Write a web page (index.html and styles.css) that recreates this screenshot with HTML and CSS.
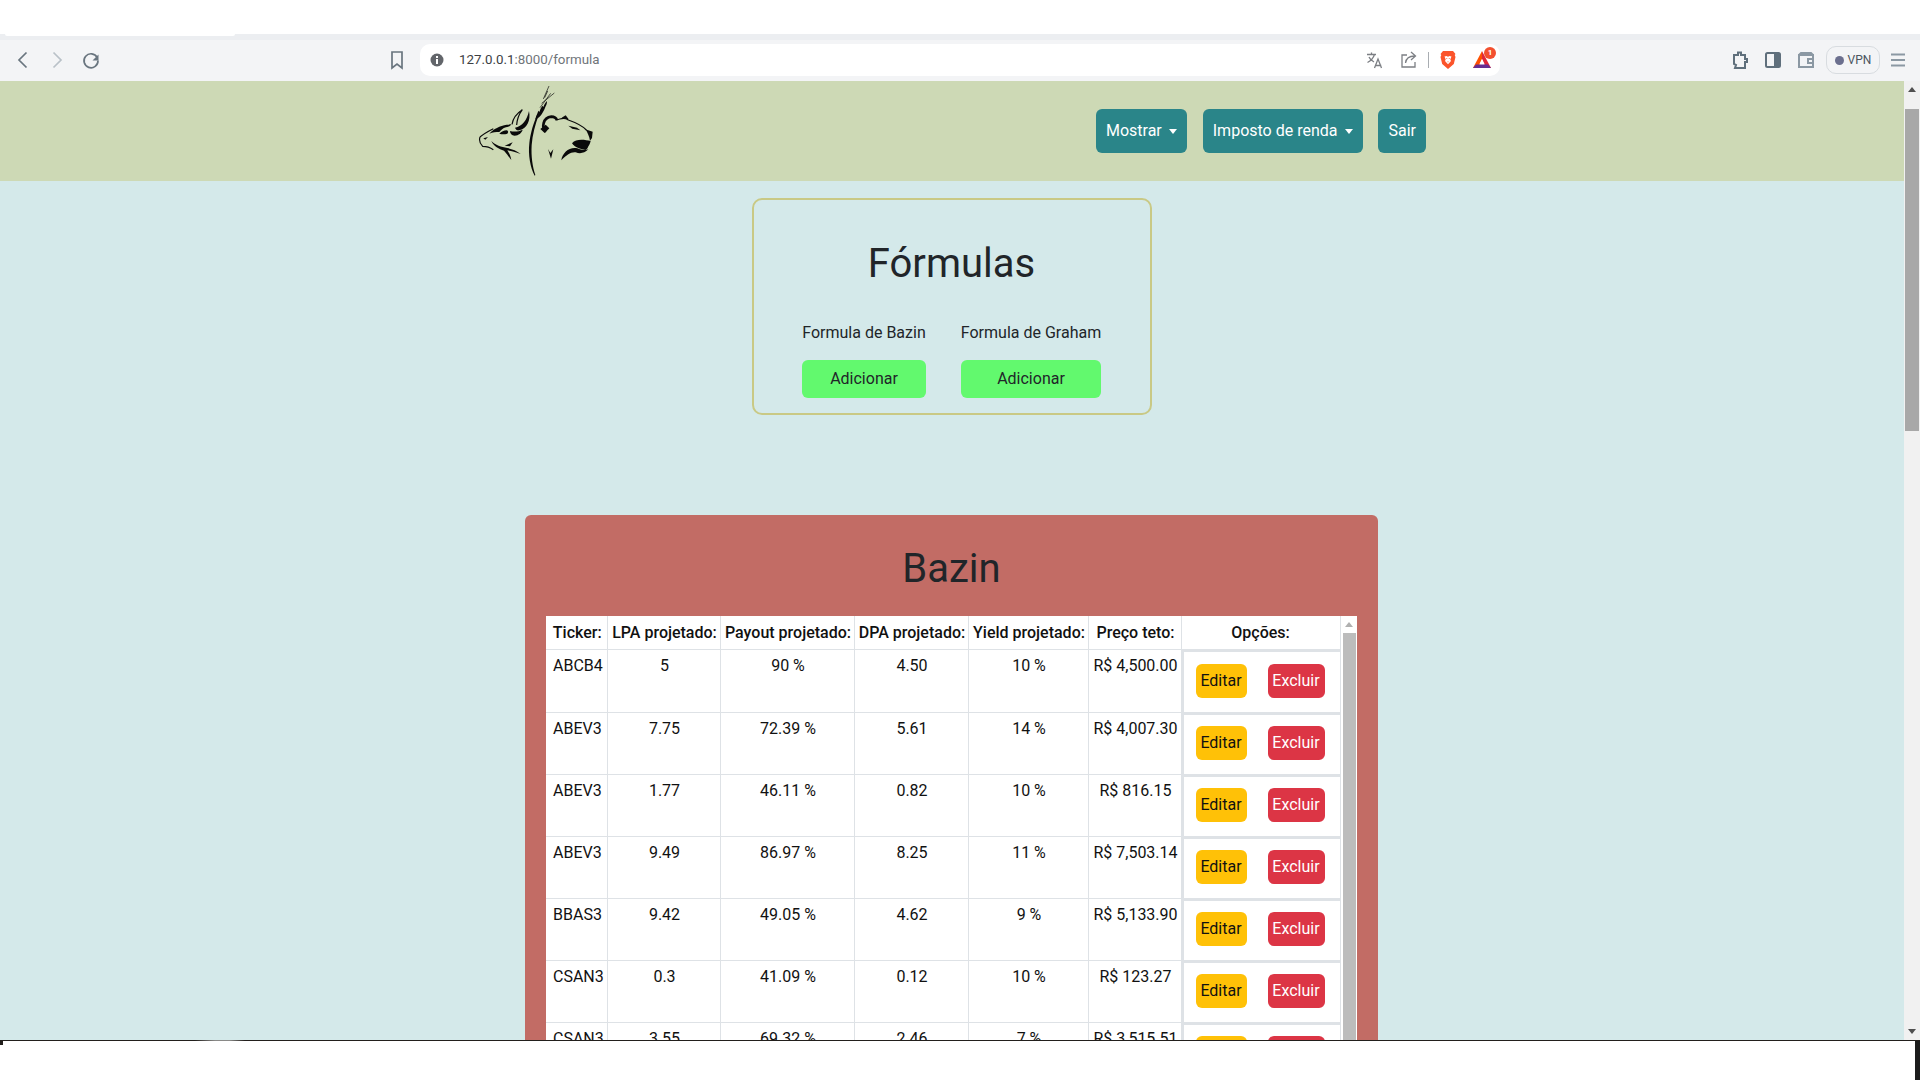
FILE: index.html
```html
<!DOCTYPE html>
<html lang="pt-BR">
<head>
<meta charset="utf-8">
<title>Fórmulas</title>
<link rel="stylesheet" href="styles.css">
</head>
<body>
<header class="chrome">
  <div class="tabstrip"></div>
  <div class="tabgap"><div class="tabtail"></div></div>
  <div class="toolbar">
    <div class="tool-left">
      <svg class="ico" viewBox="0 0 24 24"><path class="ln-nav" d="M15.5 4.5 8 12l7.5 7.5"/></svg>
      <svg class="ico" viewBox="0 0 24 24"><path class="ln-off" d="M8.5 4.5 16 12l-7.5 7.5"/></svg>
      <svg class="ico" viewBox="0 0 24 24"><path class="ln-nav" d="M18.2 9.5A7 7 0 1 0 19 12.5"/><path class="fill-nav" d="M19.5 6.5v6h-6z"/></svg>
      <svg class="ico ico-book" viewBox="0 0 24 24"><path class="ln-nav" d="M7 4h10v16l-5-4-5 4z"/></svg>
    </div>
    <div class="address">
      <svg class="info" viewBox="0 0 14 14"><circle class="fill-dark" cx="7" cy="7" r="6.5"/><rect class="fill-white" x="6" y="6" width="2" height="5"/><rect class="fill-white" x="6" y="3" width="2" height="2"/></svg>
      <span class="url"><span class="url-host">127.0.0.1</span>:8000/formula</span>
      <div class="addr-icons">
        <svg class="ico-sm" viewBox="0 0 20 20"><path class="ln-thin" d="M2 4.500h9M6.500 2.500v2M9.500 4.500C8 9 5.500 11 2.500 12.500M4 7c1 2.500 3 4 5 5M9.500 18l3.500-9 3.500 9M10.700 15.500h5.600"/></svg>
        <svg class="ico-sm" viewBox="0 0 20 20"><path class="ln-thin" d="M8 5H3v12h13v-5M6.500 13c.5-4 3.500-7 9-7M12 2l4.500 4-4.500 4"/></svg>
        <span class="addr-divider"></span>
        <svg class="ico-sm" viewBox="0 0 20 20"><path class="fill-brave" d="M5 1h10l2.500 3-.8 1 .8 2-1.700 7-5.800 5-5.800-5-1.700-7 .8-2-.8-1z"/><path class="fill-white" d="M6.500 6.500 8.500 6l1.500.8 1.500-.8 2 .5-1.200 3 .7 1.500-2.500 2.800-.5.5-.5-.5-2.500-2.800.7-1.500z"/><path class="fill-brave" d="M8 8h1.500l-.7 1zM10.500 8H12l-.8 1zM9.200 11.500h1.600l-.8 1z"/></svg>
        <svg class="ico-sm" viewBox="0 0 20 20"><path class="fill-bat-o" d="M10 1 1 18h5l4-9z"/><path class="fill-bat-r" d="M10 1l9 17h-5l-4-9z"/><path class="fill-bat-p" d="M1 18h18l-3-3.500H4z"/><path class="fill-white" d="M10 9l-2.500 5h5z"/></svg>
        <span class="badge">1</span>
      </div>
    </div>
    <div class="tool-right">
      <svg class="ico" viewBox="0 0 24 24"><path class="ln-ext" d="M6 7h4V4.500h3V7h4v4h2v3h-2v6H7l1-3-2-1z"/></svg>
      <svg class="ico" viewBox="0 0 24 24"><rect class="ln-ext" x="5" y="5" width="14" height="14" rx="1.500"/><rect class="fill-ext" x="13" y="5" width="6" height="14"/></svg>
      <svg class="ico" viewBox="0 0 24 24"><path class="ln-wal" d="M5 7h14v12H5zM5 7l2-2h10l2 2M19 11h-5v4h5"/></svg>
      <div class="vpn"><span class="vpn-dot"></span><span>VPN</span></div>
      <svg class="ico ico-menu" viewBox="0 0 18 24"><path class="ln-wal" d="M2 6.500h14M2 12h14M2 17.500h14"/></svg>
    </div>
  </div>
</header>

<div class="window">
  <main class="page">
    <nav class="navbar">
      <div class="nav-inner">
        <svg class="logo" viewBox="54 24 354 288">
          <!-- wheat -->
          <path class="lg-f" d="M224 302C211 280 204 238 208 205c3-30 13-62 24-87l4 2c-10 28-19 60-21 90-2 35 3 65 11 90z"/>
          <path class="lg-f" d="M226 133c2-10 6-17 9-26l3 4c2-7 5-13 9-19l3 4c3-7 6-12 10-18 2 5 0 10-3 16-6 15-14 34-31 39z"/>
          <path class="lg-s" d="M250 72 267 33M245 85 283 54M240 98 272 55M254 68 263 48"/>
          <!-- bull -->
          <path class="lg-s3" d="M60 186c10-9 24-17 40-25"/>
          <path class="lg-s3" d="M60 186c-3 9 0 20 8 28 12 0 22 3 32 10"/>
          <path class="lg-f" d="M88 176c12-14 32-24 52-27l14-1c-4 6-9 8-16 9-10 3-14 8-20 14-10 0-20 1-30 5z"/>
          <path class="lg-f" d="M118 176c6-6 14-10 22-10 5 2 6 6 2 10-8 2-16 2-24 0z"/>
          <path class="lg-f" d="M150 168c12 3 26 2 38-4-3 10-12 17-24 18-9 0-14-6-14-14z"/>
          <path class="lg-f" d="M165 158c22-4 36-22 42-50 6 28-6 53-30 58-6 1-10-3-12-8z"/>
          <path class="lg-s3" d="M156 148c3-20 14-33 31-44-11 15-16 30-17 46"/>
          <path class="lg-f" d="M70 190l14-4-8 8z"/>
          <path class="lg-f" d="M94 198c12 13 30 18 48 21 14 3 28 8 40 18-16-6-28-9-40-11 6 9 10 18 12 29-8-10-13-18-22-28-15-5-31-13-38-29z"/>
          <path class="lg-f" d="M134 212l24-10-8 12z"/>
          <!-- bear -->
          <path class="lg-s4" d="M258 170c-14-12-10-42 16-45 9 0 15 5 17 11"/>
          <path class="lg-f" d="M241 162l16-13 11 11-14 14z"/>
          <path class="lg-s3" d="M291 134c12-2 22-9 34 1 20 7 40 15 54 30"/>
          <path class="lg-f" d="M305 128l12-7 9 12-14-1z"/>
          <path class="lg-f" d="M376 163l22 7-2 19-6 8c-2-12-7-24-14-34z"/>
          <path class="lg-f" d="M325 152l26 6 10 8-24-5z"/>
          <path class="lg-f" d="M336 205c12-15 38-11 56-7-2 8-4 12-8 18-1 4-4 8-8 9-16-3-31-7-40-20z"/>
          <path class="lg-f" d="M304 256c3-24 26-42 48-36 11 5 22 7 33 3-12 12-25 14-38 9-14-2-28 8-43 24z"/>
          <path class="lg-f" d="M264 222l7 12 9-11-7 28z"/>
        </svg>
        <div class="nav-actions">
          <a class="nav-btn nav-btn-first">Mostrar<span class="caret caret-tight"></span></a>
          <a class="nav-btn">Imposto de renda<span class="caret"></span></a>
          <a class="nav-btn">Sair</a>
        </div>
      </div>
    </nav>

    <div class="content">
      <section class="formulas">
        <h1 class="title">Fórmulas</h1>
        <div class="formula-row">
          <div class="formula-col col-bazin">
            <span class="formula-label">Formula de Bazin</span>
            <a class="btn-add">Adicionar</a>
          </div>
          <div class="formula-col col-graham">
            <span class="formula-label">Formula de Graham</span>
            <a class="btn-add">Adicionar</a>
          </div>
        </div>
      </section>

      <section class="bazin">
        <h2 class="title">Bazin</h2>
        <div class="table-box">
          <table class="data">
            <colgroup>
              <col class="c1"><col class="c2"><col class="c3"><col class="c4"><col class="c5"><col class="c6"><col class="c7">
            </colgroup>
            <thead>
              <tr><th>Ticker:</th><th>LPA projetado:</th><th>Payout projetado:</th><th>DPA projetado:</th><th>Yield projetado:</th><th>Preço teto:</th><th class="th-opts">Opções:</th></tr>
            </thead>
            <tbody>
              <tr><td class="tick">ABCB4</td><td>5</td><td>90 %</td><td>4.50</td><td>10 %</td><td>R$ 4,500.00</td><td class="opts"><div class="opts-in"><a class="btn-edit">Editar</a><a class="btn-del">Excluir</a></div></td></tr>
              <tr><td class="tick">ABEV3</td><td>7.75</td><td>72.39 %</td><td>5.61</td><td>14 %</td><td>R$ 4,007.30</td><td class="opts"><div class="opts-in"><a class="btn-edit">Editar</a><a class="btn-del">Excluir</a></div></td></tr>
              <tr><td class="tick">ABEV3</td><td>1.77</td><td>46.11 %</td><td>0.82</td><td>10 %</td><td>R$ 816.15</td><td class="opts"><div class="opts-in"><a class="btn-edit">Editar</a><a class="btn-del">Excluir</a></div></td></tr>
              <tr><td class="tick">ABEV3</td><td>9.49</td><td>86.97 %</td><td>8.25</td><td>11 %</td><td>R$ 7,503.14</td><td class="opts"><div class="opts-in"><a class="btn-edit">Editar</a><a class="btn-del">Excluir</a></div></td></tr>
              <tr><td class="tick">BBAS3</td><td>9.42</td><td>49.05 %</td><td>4.62</td><td>9 %</td><td>R$ 5,133.90</td><td class="opts"><div class="opts-in"><a class="btn-edit">Editar</a><a class="btn-del">Excluir</a></div></td></tr>
              <tr><td class="tick">CSAN3</td><td>0.3</td><td>41.09 %</td><td>0.12</td><td>10 %</td><td>R$ 123.27</td><td class="opts"><div class="opts-in"><a class="btn-edit">Editar</a><a class="btn-del">Excluir</a></div></td></tr>
              <tr><td class="tick">CSAN3</td><td>3.55</td><td>69.32 %</td><td>2.46</td><td>7 %</td><td>R$ 3,515.51</td><td class="opts"><div class="opts-in"><a class="btn-edit">Editar</a><a class="btn-del">Excluir</a></div></td></tr>
            </tbody>
          </table>
          <div class="inner-bar">
            <span class="arrow-up inner-arrow"></span>
            <span class="inner-thumb"></span>
          </div>
        </div>
      </section>
    </div>
  </main>
  <aside class="page-bar">
    <span class="arrow-up"></span>
    <span class="page-thumb"></span>
    <span class="arrow-down"></span>
  </aside>
</div>

<footer class="taskbar">
  <div class="task-line"></div>
  <div class="task-body">
    <span class="task-mark"></span>
    <span class="task-edge"></span>
  </div>
</footer>
</body>
</html>
```
FILE: styles.css
```css
* { box-sizing: border-box; }
html, body { margin: 0; height: 100%; }
body {
  display: flex;
  flex-direction: column;
  height: 100vh;
  overflow: hidden;
  font-family: Roboto, "Liberation Sans", sans-serif;
  font-size: 16px;
  line-height: 24px;
  color: #212529;
  background: #fff;
}

/* browser chrome */
.chrome { flex: none; }
.tabstrip { height: 34px; margin-right: 5px; background: #fff; }
.tabgap { height: 6px; background: #eceef1; }
.tabtail { width: 230px; height: 2px; margin-left: 5px; background: #fff; border-radius: 0 0 4px 4px; }
.toolbar {
  display: grid;
  grid-template-columns: 420px 1080px 1fr;
  height: 41px;
  padding-bottom: 1px;
  align-items: center;
  background: #f3f4f6;
}
.tool-left { display: flex; align-items: center; gap: 10px; padding-left: 11px; padding-right: 11px; }
.ico { width: 24px; height: 24px; flex: none; }
.ico-book { margin-left: auto; }
.ico-menu { width: 18px; }
.ico-sm { width: 20px; height: 20px; flex: none; }
.ln-nav { fill: none; stroke: #69757f; stroke-width: 1.7; }
.ln-off { fill: none; stroke: #b9c1c8; stroke-width: 1.7; }
.fill-nav { fill: #69757f; }
.ln-thin { fill: none; stroke: #7c7f84; stroke-width: 1.3; }
.ln-ext { fill: none; stroke: #5f6f7c; stroke-width: 2; }
.fill-ext { fill: #5f6f7c; }
.ln-wal { fill: none; stroke: #8b98a3; stroke-width: 2; }
.fill-dark { fill: #62656a; }
.fill-white { fill: #fff; }
.fill-brave { fill: #fb542b; }
.fill-bat-o { fill: #ff5000; }
.fill-bat-r { fill: #e0283a; }
.fill-bat-p { fill: #662d91; }

.address {
  display: flex;
  align-items: center;
  height: 32px;
  padding: 0 8px 0 10px;
  background: #fff;
  border-radius: 10px;
}
.info { width: 14px; height: 14px; flex: none; }
.url { margin-left: 15px; font-size: 13.33px; line-height: 18px; color: #70757a; }
.url-host { color: #3c4043; }
.addr-icons { display: flex; align-items: center; gap: 14px; margin-left: auto; position: relative; }
.addr-divider { width: 1px; height: 16px; margin: 0 -5px; background: #a9adb2; }
.badge {
  position: absolute;
  top: -3px;
  right: -4px;
  width: 12px;
  height: 12px;
  border-radius: 50%;
  background: #f3502f;
  color: #fff;
  font-size: 8px;
  line-height: 12px;
  text-align: center;
  font-weight: 700;
}
.tool-right { display: flex; align-items: center; justify-content: flex-end; gap: 9px; padding-right: 13px; }
.vpn {
  display: flex;
  align-items: center;
  justify-content: center;
  gap: 4px;
  width: 54px;
  height: 28px;
  margin-left: -1px;
  border: 1px solid #d8dce0;
  border-radius: 10px;
  font-size: 12px;
  line-height: 16px;
  color: #4b5560;
}
.vpn-dot { width: 9px; height: 9px; border-radius: 50%; background: #6b6f8e; }

/* window */
.window { display: flex; flex: 1; min-height: 0; }
.page { flex: 1; min-width: 0; overflow: hidden; background: #d4e9ea; }
.content { padding-right: 1px; }
.page-bar {
  flex: none;
  display: flex;
  flex-direction: column;
  align-items: center;
  width: 16px;
  background: #f1f1f1;
  padding: 6px 0 6px;
}
.page-thumb { width: 14px; height: 322px; margin-top: 17px; margin-bottom: auto; background: #a8a8a8; }
.arrow-up, .arrow-down { width: 0; height: 0; border-left: 4px solid transparent; border-right: 4px solid transparent; }
.arrow-up { border-bottom: 5px solid #505050; }
.arrow-down { border-top: 5px solid #505050; }

/* navbar */
.navbar { height: 100px; background: #cdd9b5; }
.nav-inner { display: flex; align-items: center; justify-content: space-between; width: 948px; height: 100%; margin: 0 auto; }
.logo { width: 118px; height: 96px; flex: none; }
.lg-f { fill: #0a0a0a; }
.lg-s { fill: none; stroke: #0a0a0a; stroke-width: 2; }
.lg-s3 { fill: none; stroke: #0a0a0a; stroke-width: 3.500; }
.lg-s4 { fill: none; stroke: #0a0a0a; stroke-width: 8; }
.nav-actions { display: flex; gap: 15px; }
.nav-btn {
  display: flex;
  align-items: center;
  height: 44px;
  padding: 0 10px;
  border-radius: 6px;
  background: #2a8589;
  color: #fff;
}
.nav-btn-first { margin-right: 1px; }
.caret {
  width: 0;
  height: 0;
  margin-left: 8px;
  border-top: 5px solid #fff;
  border-left: 4.500px solid transparent;
  border-right: 4.500px solid transparent;
}
.caret-tight { margin-left: 7px; }

/* formulas card */
.title { margin: 0; font-size: 40px; line-height: 48px; font-weight: 400; text-align: center; color: #212529; }
.formulas {
  width: 400px;
  height: 217px;
  margin: 17px auto 0;
  padding-top: 40px;
  border: 2px solid #c9c985;
  border-radius: 10px;
}
.formula-row { display: flex; justify-content: center; gap: 35px; margin-top: 33px; }
.formula-col { display: flex; flex-direction: column; align-items: stretch; gap: 15px; text-align: center; }
.col-bazin { width: 124px; }
.col-graham { width: 140px; }
.formula-label { margin: 0 -3px; white-space: nowrap; }
.btn-add {
  display: flex;
  align-items: center;
  justify-content: center;
  height: 38px;
  border-radius: 6px;
  background: #62f96e;
}

/* Bazin card */
.bazin {
  width: 853px;
  height: 700px;
  margin: 100px auto 0;
  padding: 30px 21px 0;
  background: #c26c65;
  border-radius: 6px;
}
.table-box {
  display: flex;
  width: 811px;
  height: 640px;
  margin-top: 23px;
  background: #fff;
  overflow: hidden;
}
.data {
  flex: none;
  width: 794px;
  height: fit-content;
  table-layout: fixed;
  border-collapse: collapse;
  border-right: 1px solid #c26c65;
  color: #111;
}
.c1 { width: 61px; }
.c2 { width: 113px; }
.c3 { width: 134px; }
.c4 { width: 114px; }
.c5 { width: 120px; }
.c6 { width: 93px; }
.c7 { width: 159px; }
.data th, .data td { border: 1px solid #dee2e6; text-align: center; white-space: nowrap; }
.data th { height: 33px; padding: 5px 0 3px 2px; font-weight: 500; }
.data td { height: 62px; padding: 4px 0 0 2px; vertical-align: top; }
.data .th-opts { padding-left: 0; }
.data tr > :first-child { border-left: 0; }
.data thead th { border-top: 0; }
.data tbody tr:first-child td { height: 63px; }
.data .tick { text-align: left; padding-left: 7px; }
.data .opts { vertical-align: middle; padding: 0; box-shadow: inset 1px 1px 0 1px #dee2e6; }
.opts-in { display: flex; gap: 21px; padding-left: 14px; }
.btn-edit, .btn-del { display: flex; align-items: center; justify-content: center; height: 34px; border-radius: 6px; }
.btn-edit { width: 51px; background: #ffc107; color: #111; }
.btn-del { width: 57px; background: #dc3545; color: #fff; }
.inner-bar { flex: none; display: flex; flex-direction: column; align-items: center; width: 17px; padding-top: 6px; background: #fff; }
.inner-arrow { border-bottom-color: #b0b0b0; }
.inner-thumb { width: 13px; height: 620px; margin-top: 6px; background: #bcbcbc; }

/* bottom strip */
.taskbar { flex: none; display: flex; flex-direction: column; height: 40px; background: #fff; }
.task-line { height: 1px; background: linear-gradient(to right, #221f1c 195px, #8a8a88 215px, #8a8a88 230px, #221f1c 245px); }
.task-body { display: flex; flex: 1; justify-content: space-between; align-items: flex-start; }
.task-mark { width: 3px; height: 4px; background: #221f1c; }
.task-edge { width: 5px; height: 100%; background: #1c1c1c; }
```
